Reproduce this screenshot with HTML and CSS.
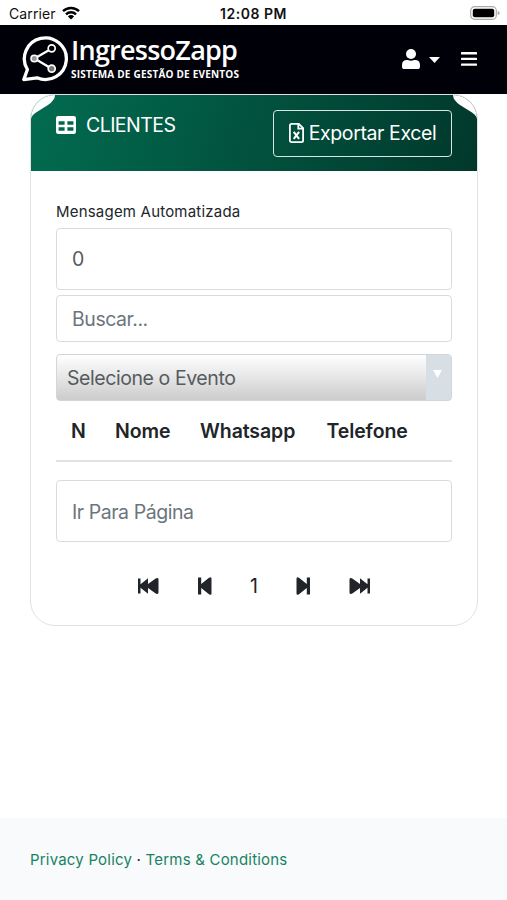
FILE: index.html
```html
<!DOCTYPE html>
<html lang="pt-BR">
<head>
<meta charset="utf-8">
<meta name="viewport" content="width=device-width, initial-scale=1">
<title>IngressoZapp</title>
<link rel="stylesheet" href="styles.css">
</head>
<body>
<div class="status">
  <div class="carrier"><span>Carrier</span>
    <svg width="18" height="14" viewBox="0 0 18 14"><g fill="none" stroke="#000" stroke-width="2.4"><path d="M1 5.2a11.5 11.5 0 0 1 16 0"/><path d="M4 8.3a7.2 7.2 0 0 1 10 0"/></g><path d="M9 13.6 5.9 10.4a4.4 4.4 0 0 1 6.2 0z"/></svg>
  </div>
  <div class="time">12:08 PM</div>
  <div class="power"><svg width="30" height="14" viewBox="0 0 30 14"><rect x=".7" y=".7" width="25.6" height="12.6" rx="3.8" fill="#fff" stroke="#aaa" stroke-width="1.2"/><rect x="2.8" y="2.7" width="21.4" height="8.6" rx="2" fill="#000"/><path d="M27.7 4.8q2 .7 2 2.2t-2 2.2z" fill="#aaa"/></svg></div>
</div>
<header class="nav">
  <div class="brand">
    <svg class="mark" width="47" height="47" viewBox="0 0 47 47" fill="none" stroke="#fff"><path d="M5.400 33.500A21 20.800 0 1 1 15 41.800L1.800 43.600z" stroke-width="3.300" stroke-linejoin="round"/><path d="M12.500 22.500 29.400 12.700M12.500 22.500 29.400 32.500" stroke-width="2.200"/><circle cx="12.300" cy="22.500" r="3.300" fill="#999" stroke-width="1.600"/><circle cx="29.700" cy="12.300" r="3.500" fill="#000008" stroke-width="1.700"/><circle cx="29.700" cy="32.700" r="3.500" fill="#777" stroke-width="1.700"/></svg>
    <div class="words"><span class="name">IngressoZapp</span><span class="tag">SISTEMA DE GESTÃO DE EVENTOS</span></div>
  </div>
  <div class="tools">
    <svg class="user" width="18" height="20" viewBox="0 0 18 20" fill="#fff"><circle cx="9" cy="5" r="5"/><path d="M0 17.400V16q0-5 5-5h1q3 1.400 6 0h1q5 0 5 5v1.400Q18 20 15.400 20H2.600Q0 20 0 17.400z"/></svg>
    <svg class="caret" width="11" height="6" viewBox="0 0 11 6"><path d="M0 0h11L5.500 6z" fill="#fff"/></svg>
    <svg width="16" height="14" viewBox="0 0 16 14" fill="#fff"><rect y="0" width="16" height="2.400" rx=".5"/><rect y="5.700" width="16" height="2.400" rx=".5"/><rect y="11.400" width="16" height="2.400" rx=".5"/></svg>
  </div>
</header>
<main>
  <section class="card">
    <div class="card-head">
      <svg class="corner left" width="25" height="25" viewBox="0 0 25 25"><path d="M0 24Q0 21 5 17.500L17 10Q24 5 24 0H0z" fill="#fff"/></svg>
      <svg class="corner right" width="25" height="25" viewBox="0 0 25 25"><path d="M25 24Q25 21 20 17.500L8 10Q1 5 1 0H25z" fill="#fff"/></svg>
      <h1><svg width="20" height="18" viewBox="0 0 20 18"><path fill="#fff" fill-rule="evenodd" d="M2.200 0h15.600Q20 0 20 2.200v13.600q0 2.200-2.200 2.200H2.200Q0 18 0 15.800V2.200Q0 0 2.200 0zM2.600 5.200v3.500h6V5.200zm8.800 0v3.500h6V5.200zM2.600 11.200v3.600h6v-3.600zm8.800 0v3.600h6v-3.600z"/></svg><span>CLIENTES</span></h1>
      <button class="export"><svg width="15" height="20" viewBox="0 0 15 20" fill="none" stroke="#fff" stroke-width="1.800"><path d="M2.500.9h7.300l4.300 4.300v12.300q0 1.600-1.600 1.600h-10Q.9 19.100.9 17.500v-15Q.9.900 2.500.9z"/><path d="M9.300 1v4.700H14"/><path d="m4.700 8.800 5.400 7M10.100 8.800l-5.400 7" stroke-width="2"/></svg><span>Exportar Excel</span></button>
    </div>
    <div class="card-body">
      <label>Mensagem Automatizada</label>
      <div class="field tall value"><span>0</span></div>
      <div class="field search"><span>Buscar...</span></div>
      <div class="select"><span class="choice">Selecione o Evento</span><span class="arrow"><svg width="9" height="8" viewBox="0 0 9 8"><path d="M0 0h9L4.500 8z" fill="#fff"/></svg></span></div>
      <div class="thead"><span class="c1">N</span><span class="c2">Nome</span><span class="c3">Whatsapp</span><span class="c4">Telefone</span></div>
      <div class="field tall page"><span>Ir Para Página</span></div>
      <nav class="pager">
        <svg width="21" height="16" viewBox="0 0 21 16"><path d="M0 .5h2.500v5.800L10 .3v5.600L17.700.4Q20.500-.8 20.500 1.500v13q0 2.300-2.800 1.100L10 10.100v5.600L2.500 9.700v5.800H0z"/></svg>
        <svg width="14" height="18" viewBox="0 0 14 18"><path d="M0 .5h3.200v6.500L11 .8Q13.500-.6 13.500 1.800v14.400q0 2.400-2.500 1L3.200 11v6.500H0z"/></svg>
        <span>1</span>
        <svg width="14" height="18" viewBox="0 0 14 18"><path d="M14 .5h-3.200v6.500L3 .8Q.5-.6.5 1.800v14.400q0 2.400 2.500 1l7.800-6.200v6.500H14z"/></svg>
        <svg width="21" height="16" viewBox="0 0 21 16"><path d="M21 .5h-2.500v5.800L11 .3v5.600L3.300.4Q.5-.8.5 1.500v13q0 2.300 2.800 1.100L11 10.100v5.600l7.500-6v5.800H21z"/></svg>
      </nav>
    </div>
  </section>
</main>
<footer><a>Privacy Policy</a><i>·</i><a>Terms &amp; Conditions</a></footer>
</body>
</html>
```
FILE: styles.css
```css
* { box-sizing: border-box; }
body { margin: 0; height: 900px; display: flex; flex-direction: column; background: #fff; color: #212529; font-family: Inter, "Liberation Sans", sans-serif; overflow: hidden; }
svg { display: block; flex: none; fill: #212529; }
span { white-space: nowrap; }

.status { height: 25px; flex: none; display: grid; grid-template-columns: 1fr auto 1fr; align-items: center; padding: 2px 7px 0 9px; color: #111; font-size: 14px; }
.carrier { display: flex; align-items: center; gap: 6px; letter-spacing: .1px; }
.carrier svg { margin-top: -2px; fill: #000; }
.time { font-weight: 600; letter-spacing: .55px; margin-right: 2px; font-size: 14px; }
.power { justify-self: end; margin-top: -1px; }

.nav { height: 69px; flex: none; display: flex; justify-content: space-between; background: #000008; padding: 0 30px 0 22px; }
.nav svg { fill: #fff; }
.nav .mark { fill: none; }
.brand { display: flex; gap: 2px; padding-top: 11px; color: #fff; font-family: "Open Sans", "Noto Sans", sans-serif; }
.words { display: flex; flex-direction: column; }
.name { font-size: 27px; line-height: 28px; font-weight: 600; letter-spacing: -.750px; }
.tag { font-size: 10px; line-height: 12px; margin-top: 4px; font-weight: 700; letter-spacing: .2px; }
.tools { display: flex; align-items: center; padding-bottom: 1px; }
.user { margin-right: 9px; }
.caret { margin: 1px 21px 0 0; }
.tools svg:last-child { margin-top: -1px; }

.card { width: 448px; height: 532px; margin-left: 30px; border: 1px solid #dfe2e3; border-radius: 25px; overflow: hidden; }
.card-head { position: relative; height: 76px; display: flex; justify-content: space-between; padding: 15px 25px 0 25px; background: linear-gradient(105deg, #026c50 0%, #01382c 100%); color: #fff; }
.corner { position: absolute; top: 0; }
.left { left: 0; }
.right { right: 0; }
h1 { display: flex; align-items: center; height: 30px; gap: 10px; margin: 0; font-size: 19.500px; font-weight: 400; letter-spacing: -.550px; }
.export { display: flex; align-items: center; justify-content: center; gap: 5px; width: 179px; height: 46.500px; padding: 0; border: 1.500px solid #d8e5e1; border-radius: 4px; background: none; color: #fff; font: 400 19.500px Inter, sans-serif; letter-spacing: -.400px; }
.export svg { fill: none; }

.card-body { display: flex; flex-direction: column; padding: 31px 25px 0; }
label { height: 20px; font-size: 15px; line-height: 20px; margin-bottom: 6px; letter-spacing: .200px; }
.field { display: flex; align-items: center; padding-left: 15px; border: 1.500px solid #d9dcde; border-radius: 4px; color: #6c757d; font-size: 19.500px; letter-spacing: -.450px; }
.tall { height: 62px; }
.value { color: #555b60; }
.search { height: 47px; margin-top: 5px; }
.select { display: flex; height: 47px; margin-top: 12px; border: 1px solid #d2d6d9; border-radius: 4px; overflow: hidden; background: linear-gradient(#fff, #ccc); color: #555b60; font-size: 19.500px; letter-spacing: -.430px; }
.choice { flex: 1; padding-left: 10px; line-height: 47px; }
.arrow { width: 25px; padding: 15px 0 0 7px; background: #d7dee4; }
.thead { display: flex; height: 61px; padding-left: 15px; border-bottom: 2px solid #dee2e6; font-size: 19.500px; font-weight: 600; line-height: 60px; letter-spacing: -.100px; }
.c1 { width: 44px; }
.c2 { width: 85px; }
.c3 { width: 126.500px; }
.page { margin-top: 18px; }
.page span { padding-top: 1px; }
.pager { display: flex; justify-content: space-between; align-items: center; height: 30px; width: 232px; margin: 29px 0 0 82px; font-size: 19.500px; }

footer { height: 82px; margin-top: auto; flex: none; padding: 32px 0 0 30px; background: #f8fafc; font-size: 15px; line-height: 20px; letter-spacing: .200px; color: #212529; white-space: nowrap; }
footer a { color: #198264; }
footer i { font-style: normal; margin: 0 4.500px; }
```
